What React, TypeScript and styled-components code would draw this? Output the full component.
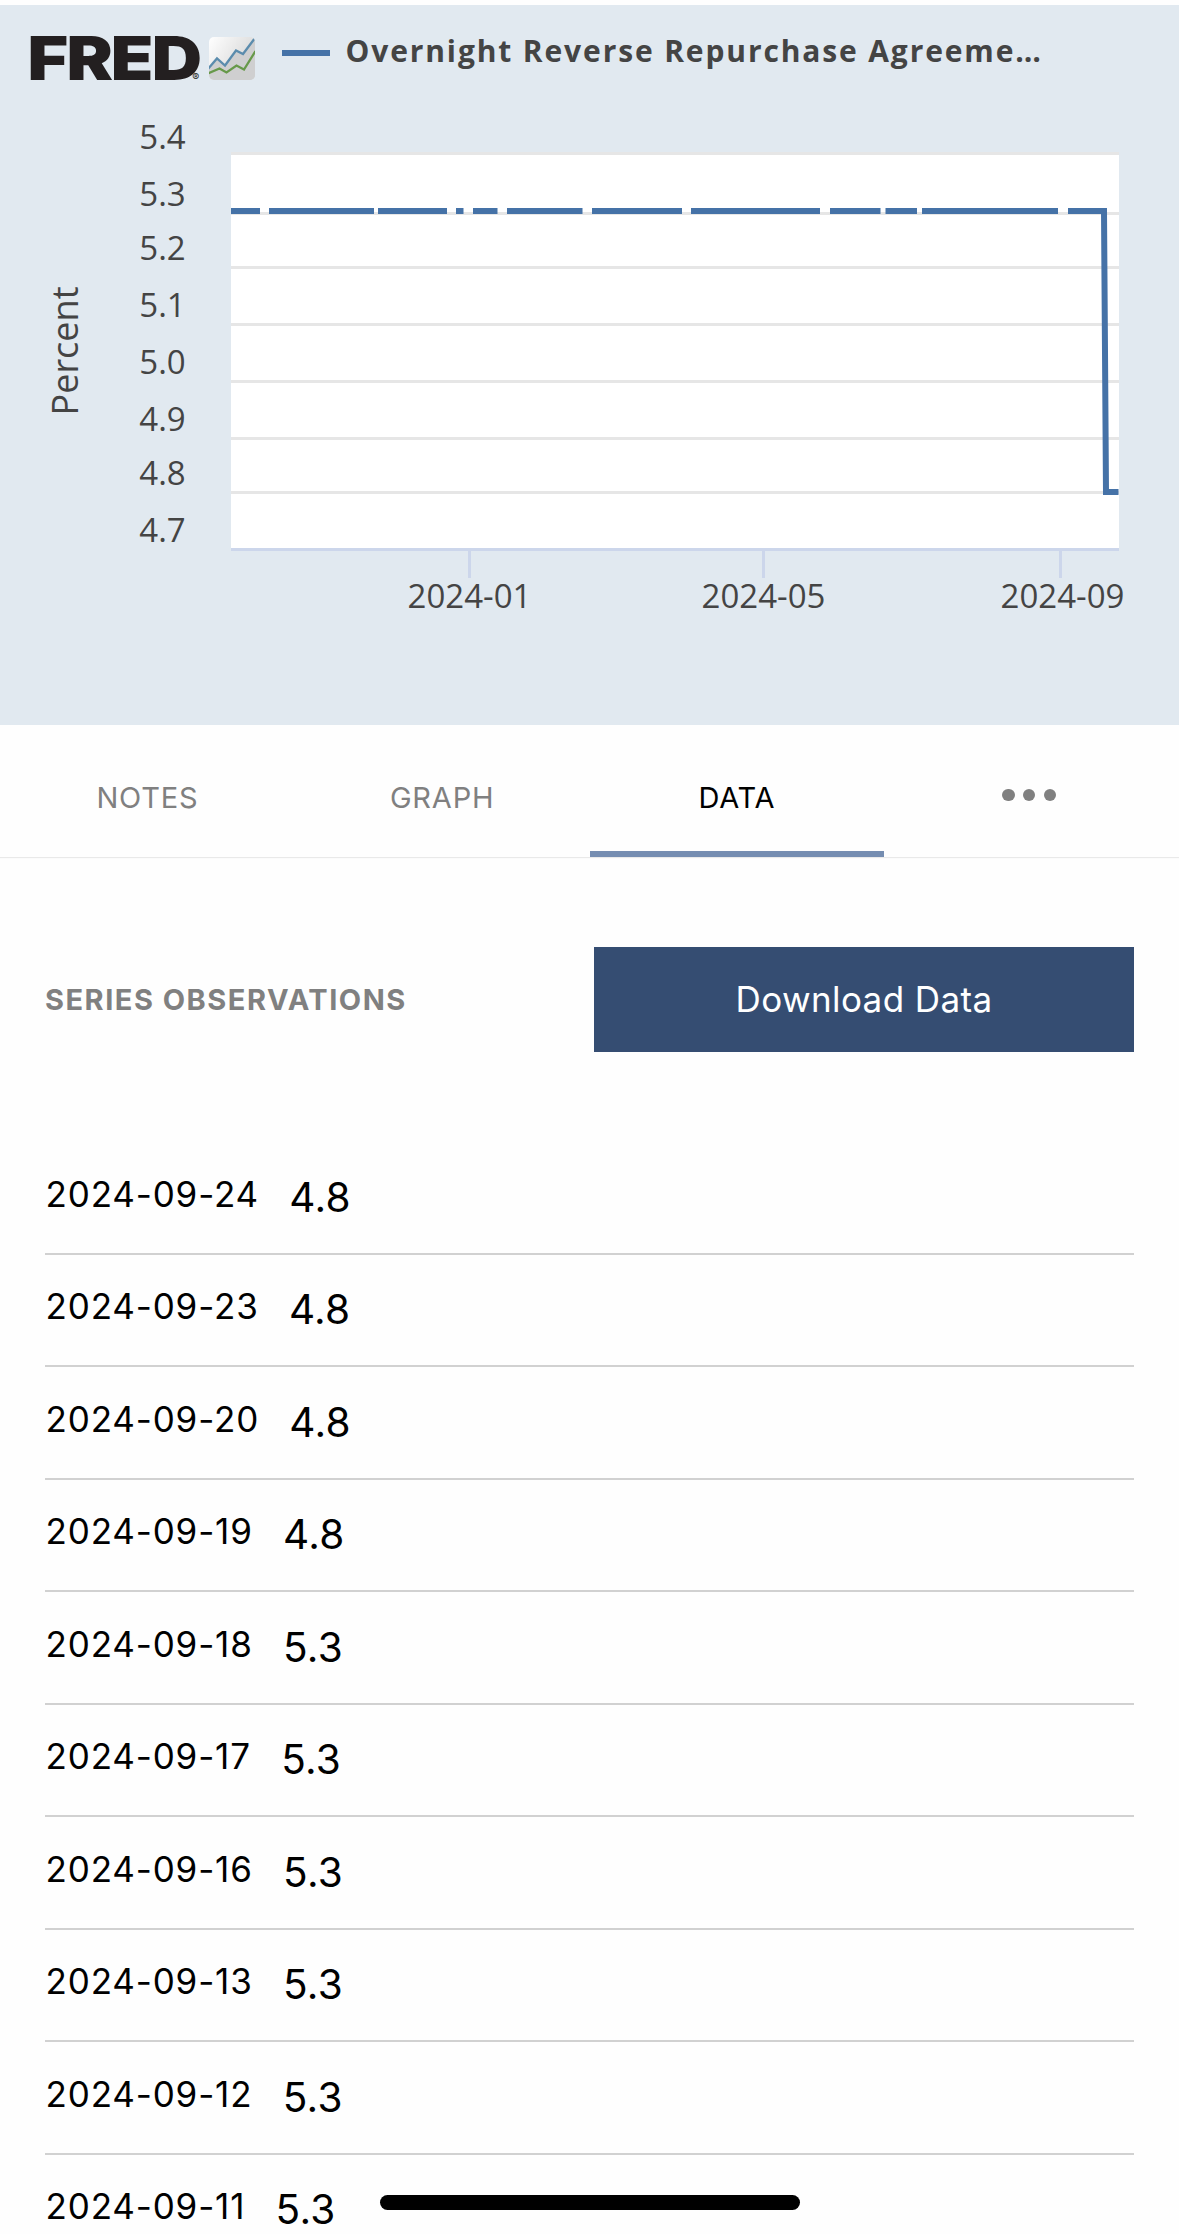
import React from "react";
import styled, { createGlobalStyle } from "styled-components";

const GlobalStyle = createGlobalStyle`
  * { box-sizing: border-box; }
  html, body { margin: 0; padding: 0; background: #fff; }
`;

const Screen = styled.div`
  position: relative;
  width: 1179px;
  height: 2234px;
  padding-top: 5px;
  overflow: hidden;
  background: #fefefe;
  color: #000;
  font-family: Inter, "Liberation Sans", sans-serif;
`;

const GraphPanel = styled.section`
  display: flex;
  flex-direction: column;
  height: 720px;
  background: #e1e9f0;
`;

const GraphHeader = styled.header`
  display: flex;
  align-items: center;
  height: 95px;
  padding-left: 21px;
`;

const Logo = styled.svg`
  flex: none;
  width: 236px;
  height: 95px;
  overflow: visible;
`;

const LegendMark = styled.span`
  flex: none;
  width: 48px;
  height: 6px;
  margin: 1px 15.5px 0 25px;
  background: #4572a7;
`;

const LegendLabel = styled.span`
  padding-bottom: 4px;
  white-space: nowrap;
  font: 700 30px/40px "Open Sans", sans-serif;
  letter-spacing: 1.87px;
  color: #444;
`;

const Plot = styled.svg`
  display: block;
  width: 1179px;
  height: 625px;
`;

const Tabs = styled.nav`
  display: grid;
  grid-template-columns: repeat(4, 1fr);
  height: 132px;
  box-shadow: 0 1px 1px #e9e9e9;
`;

const Tab = styled.button<{ $active?: boolean }>`
  display: flex;
  align-items: center;
  justify-content: center;
  padding: 19px 0 0;
  border: 0;
  border-bottom: 6px solid ${(p) => (p.$active ? "#758db1" : "transparent")};
  background: none;
  font: 400 29px/36px Inter, sans-serif;
  letter-spacing: 0.8px;
  color: ${(p) => (p.$active ? "#000" : "#808080")};
`;

const Dots = styled.span`
  display: flex;
  gap: 8.1px;
  padding: 0 5px 5px 0;
`;

const Dot = styled.span`
  width: 12.6px;
  height: 12.6px;
  border-radius: 50%;
  background: #808080;
`;

const DataHeader = styled.div`
  display: flex;
  align-items: center;
  justify-content: space-between;
  margin: 90px 45px 0;
`;

const Heading = styled.h2`
  margin: 0;
  font: 700 29px/36px Inter, sans-serif;
  letter-spacing: 1.5px;
  color: #808080;
`;

const DownloadButton = styled.button`
  width: 540px;
  height: 105px;
  padding: 0 0 1px;
  border: 0;
  background: #354d72;
  color: #fff;
  font: 400 35px/44px Inter, sans-serif;
  letter-spacing: 0.4px;
`;

const Observations = styled.ul`
  margin: 90px 45px 0;
  padding: 0;
  list-style: none;
`;

const Row = styled.li`
  display: flex;
  align-items: baseline;
  height: 112.5px;
  padding: 26.8px 0 0 0.5px;
  border-bottom: 2px solid #d1d1d1;
  white-space: nowrap;
`;

const DateText = styled.span`
  font-size: 35px;
  line-height: 48px;
  letter-spacing: 0.85px;
`;

const ValueText = styled.span`
  position: relative;
  top: 5px;
  margin-left: 30.3px;
  font-size: 40.5px;
  line-height: 48px;
  letter-spacing: 0.3px;
`;

const HomeIndicator = styled.div`
  position: absolute;
  left: 380px;
  bottom: 24px;
  width: 420px;
  height: 15px;
  border-radius: 8px;
  background: #000;
`;

const gridLines = [153.5, 213.5, 267.5, 324.5, 381.5, 438.5, 492.5];
const yLabels: [string, number][] = [
  ["5.4", 149], ["5.3", 206], ["5.2", 260], ["5.1", 317],
  ["5.0", 374], ["4.9", 431], ["4.8", 485], ["4.7", 542],
];
const xTicks: [string, number][] = [["2024-01", 469.5], ["2024-05", 763.5], ["2024-09", 1060.5]];
const segments = [
  [231, 260], [269, 374], [378, 447], [456, 463.5], [473, 497.5], [507, 582.5], [592, 682],
  [691, 820], [830, 880.5], [885.5, 917], [922, 1058],
];

const observations: [string, string][] = [
  ["2024-09-24", "4.8"], ["2024-09-23", "4.8"], ["2024-09-20", "4.8"], ["2024-09-19", "4.8"],
  ["2024-09-18", "5.3"], ["2024-09-17", "5.3"], ["2024-09-16", "5.3"], ["2024-09-13", "5.3"],
  ["2024-09-12", "5.3"], ["2024-09-11", "5.3"],
];

function FredLogo() {
  return (
    <Logo viewBox="21 5 236 95">
      <defs>
        <linearGradient id="tile" x1="0" y1="0" x2="1" y2="0.6">
          <stop offset="0" stopColor="#fff" />
          <stop offset="1" stopColor="#d4d4d4" />
        </linearGradient>
        <clipPath id="tileClip"><rect x="209" y="37" width="46" height="43" rx="5" /></clipPath>
      </defs>
      <text
        x="23.7 57.4 95.5 130.8"
        y="80"
        transform="scale(1.16 1)"
        fontFamily="Inter, sans-serif"
        fontWeight="900"
        fontSize="60"
        fill="#231f20"
      >
        FRED
      </text>
      <text x="192.2" y="81" fontFamily="Inter, sans-serif" fontSize="10.5" fill="#231f20">®</text>
      <g clipPath="url(#tileClip)">
        <rect x="209" y="37" width="46" height="43" fill="url(#tile)" />
        <path d="M209 68L217 58L225 66L236 50L243 54L255 38V80H209Z" fill="#cfcfd0" />
        <path d="M208 69L217 58.5L225 65.5L236 50.5L243 54L255 38" fill="none" stroke="#5b8cad" strokeWidth="2.3" />
        <path d="M208 73.5L219.5 68.5L226.5 72.5L236.5 65.5L244 69.5L255.5 51" fill="none" stroke="#67994a" strokeWidth="2.3" />
      </g>
    </Logo>
  );
}

function RateChart() {
  return (
    <Plot viewBox="0 100 1179 625" fontFamily="'Open Sans', sans-serif" fontSize="33" fill="#444">
      <rect x="231" y="153" width="888" height="396" fill="#fff" />
      {gridLines.map((y) => (
        <path key={y} d={`M231 ${y}H1119`} stroke="#e6e6e6" strokeWidth="3" />
      ))}
      <path d="M231 549.5H1119" stroke="#ccd6eb" strokeWidth="3" />
      {yLabels.map(([label, y]) => (
        <text key={label} x="185.7" y={y} textAnchor="end">{label}</text>
      ))}
      {xTicks.map(([label, x]) => (
        <g key={label}>
          <path d={`M${x} 551V578`} stroke="#ccd6eb" strokeWidth="3" />
          <text x={x === 1060.5 ? 1062.5 : x} y="608" textAnchor="middle">{label}</text>
        </g>
      ))}
      <text transform="translate(78 351) rotate(-90)" textAnchor="middle" fontSize="36">Percent</text>
      <g fill="none" stroke="#4572a7" strokeWidth="6">
        {segments.map(([from, to]) => <path key={from} d={`M${from} 211H${to}`} />)}
        <path d="M1068 211H1104L1106 492H1118.5" />
      </g>
    </Plot>
  );
}

export default function App() {
  return (
    <Screen>
      <GlobalStyle />
      <GraphPanel>
        <GraphHeader>
          <FredLogo />
          <LegendMark />
          <LegendLabel>Overnight Reverse Repurchase Agreeme…</LegendLabel>
        </GraphHeader>
        <RateChart />
      </GraphPanel>
      <Tabs>
        <Tab>NOTES</Tab>
        <Tab>GRAPH</Tab>
        <Tab $active>DATA</Tab>
        <Tab aria-label="More"><Dots><Dot /><Dot /><Dot /></Dots></Tab>
      </Tabs>
      <DataHeader>
        <Heading>SERIES OBSERVATIONS</Heading>
        <DownloadButton>Download Data</DownloadButton>
      </DataHeader>
      <Observations>
        {observations.map(([date, value]) => (
          <Row key={date}>
            <DateText>{date}</DateText>
            <ValueText>{value}</ValueText>
          </Row>
        ))}
      </Observations>
      <HomeIndicator />
    </Screen>
  );
}
